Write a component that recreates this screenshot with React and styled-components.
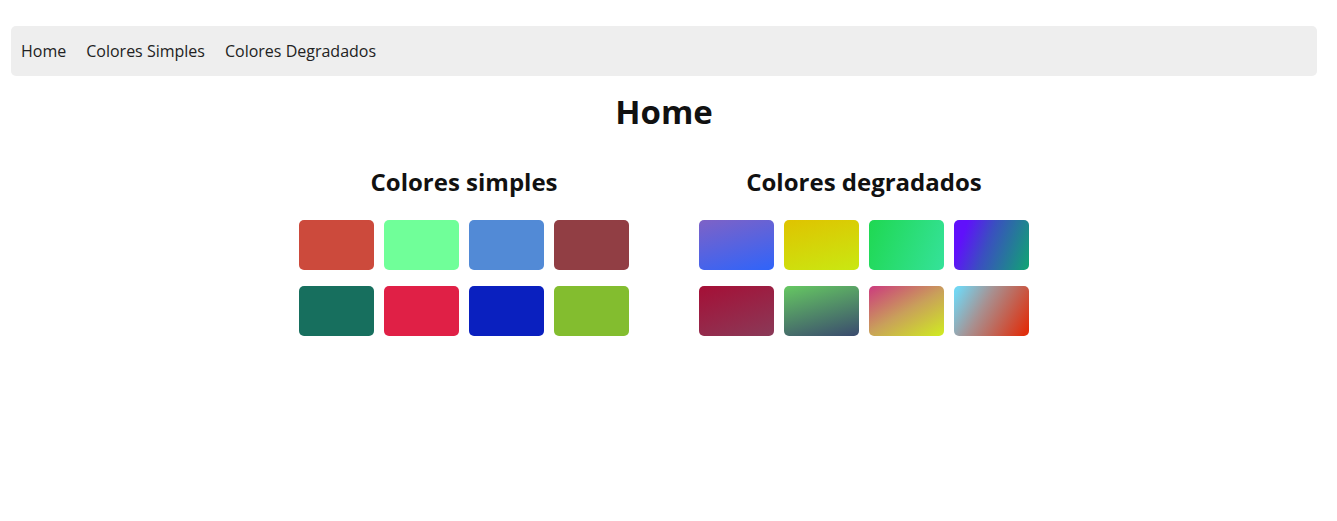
import React from 'react';
import styled, { createGlobalStyle } from 'styled-components';

const Global = createGlobalStyle`
  body {
    margin: 0;
    background: #fff;
    font-family: "Open Sans", "Noto Sans", sans-serif;
    color: #111;
  }
`;

const Page = styled.div`
  padding: 26px 20px 0 11px;
`;

const Nav = styled.nav`
  display: flex;
  align-items: center;
  gap: 20px;
  height: 50px;
  padding: 0 10px;
  background-color: #eeeeee;
  border-radius: 5px;
  box-sizing: border-box;
`;

const NavLink = styled.a`
  font-size: 16px;
  color: #222;
  text-decoration: none;
  line-height: 48px;
`;

const Title = styled.h1`
  margin: 14px 0 0;
  text-align: center;
  font-size: 33px;
  line-height: 44px;
  font-weight: 700;
`;

const Sections = styled.div`
  display: flex;
  justify-content: center;
  gap: 70px;
  margin-top: 32px;
`;

const Section = styled.section`
  display: flex;
  flex-direction: column;
  align-items: center;
`;

const Heading = styled.h2`
  margin: 0 0 22px;
  font-size: 24px;
  line-height: 32px;
  font-weight: 700;
`;

const Grid = styled.div`
  display: grid;
  grid-template-columns: repeat(4, 75px);
  column-gap: 10px;
  row-gap: 16px;
`;

const Swatch = styled.div`
  height: 50px;
  border-radius: 5px;
  background: ${p => p.$bg};
`;

const simples = ['#cc4a3c', '#70ff99', '#528ad6', '#913e44', '#176f5e', '#e02046', '#0a20bf', '#83bd2f'];

const degradados = [
  'linear-gradient(165deg, #7e62c6, #2f64fa)',
  'linear-gradient(165deg, #dfc300, #c9e812)',
  'linear-gradient(110deg, #1fd851, #35e29a)',
  'linear-gradient(110deg, #6010fb 15%, #3a4fc0 45%, #10a572)',
  'linear-gradient(160deg, #a50f36, #8a3a58)',
  'linear-gradient(165deg, #66c862, #3a4a6e)',
  'linear-gradient(150deg, #cc3a7e, #c9a05a 50%, #d0ed20)',
  'linear-gradient(120deg, #72d6f2 5%, #a89090 40%, #e02e0c 95%)',
];

export default function App() {
  return (
    <Page>
      <Global />
      <Nav>
        <NavLink href="#">Home</NavLink>
        <NavLink href="#">Colores Simples</NavLink>
        <NavLink href="#">Colores Degradados</NavLink>
      </Nav>
      <Title>Home</Title>
      <Sections>
        <Section>
          <Heading>Colores simples</Heading>
          <Grid>
            {simples.map(c => <Swatch key={c} $bg={c} />)}
          </Grid>
        </Section>
        <Section>
          <Heading>Colores degradados</Heading>
          <Grid>
            {degradados.map(c => <Swatch key={c} $bg={c} />)}
          </Grid>
        </Section>
      </Sections>
    </Page>
  );
}
